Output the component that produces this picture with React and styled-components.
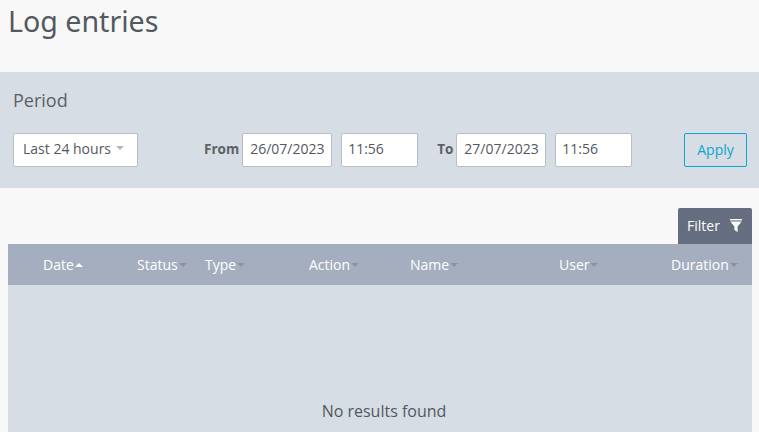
import React from "react";
import styled, { createGlobalStyle } from "styled-components";

const GlobalStyle = createGlobalStyle`
  html, body {
    margin: 0;
    height: 100%;
    overflow: hidden;
    background-color: #f8f8f8;
    font-family: "Open Sans", "Noto Sans", sans-serif;
    color: #54585f;
  }
  * {
    box-sizing: border-box;
  }
`;

const Page = styled.div`
  width: 759px;
  height: 432px;
  overflow: hidden;
`;

const Header = styled.header`
  height: 72px;
  padding: 2px 8px 0;
`;

const Title = styled.h1`
  margin: 0;
  font-family: "Noto Sans", sans-serif;
  font-size: 28.6px;
  line-height: 38px;
  font-weight: 400;
  color: #54585f;
`;

const PeriodPanel = styled.section`
  height: 116px;
  padding: 16px 12px 0 13px;
  background-color: #d6dde4;
`;

const PeriodTitle = styled.h2`
  margin: 0 0 21px;
  font-size: 18px;
  line-height: 24px;
  font-weight: 400;
  color: #5d6166;
`;

const PeriodRow = styled.div`
  display: flex;
  align-items: center;
  height: 34px;
`;

const SelectBox = styled.div`
  display: flex;
  align-items: center;
  width: 125px;
  height: 34px;
  padding: 0 0 4px 9px;
  margin-right: 66px;
  background-color: #fff;
  border: 1px solid #b9bec4;
  border-radius: 2px;
  font-size: 14px;
`;

const Caret = styled.span`
  display: inline-block;
  width: 0;
  height: 0;
  margin-left: ${(p) => p.$gap ?? 1}px;
  border-left: 4px solid transparent;
  border-right: 4px solid transparent;
  border-top: ${(p) => (p.$up ? "0" : "4px solid " + p.$color)};
  border-bottom: ${(p) => (p.$up ? "4px solid " + p.$color : "0")};
`;

const FieldLabel = styled.label`
  margin: 0 3px 3px 0;
  font-size: 13.5px;
  font-weight: 700;
  color: #5d6166;
`;

const FieldBox = styled.div`
  display: flex;
  align-items: center;
  width: ${(p) => p.$width}px;
  height: 34px;
  margin-right: ${(p) => p.$after}px;
  padding: 0 0 4px ${(p) => p.$pad}px;
  background-color: #fff;
  border: 1px solid #b9bec4;
  border-radius: 2px;
  font-size: 14px;
`;

const ApplyButton = styled.button`
  width: 63px;
  height: 34px;
  margin-left: auto;
  padding: 0 0 1px;
  background: transparent;
  border: 1px solid #0ea5cf;
  border-radius: 2px;
  color: #0ea5cf;
  font-family: inherit;
  font-size: 14px;
`;

const Results = styled.section`
  padding: 20px 7px 0 8px;
`;

const FilterBar = styled.div`
  display: flex;
  justify-content: flex-end;
`;

const FilterButton = styled.button`
  display: flex;
  align-items: center;
  width: 74px;
  height: 36px;
  padding: 0 0 2px 9px;
  background-color: #656d80;
  border: 0;
  border-radius: 2px 2px 0 0;
  color: #fff;
  font-family: inherit;
  font-size: 14px;
`;

const FilterIcon = styled.svg`
  width: 12px;
  height: 13px;
  margin-left: 10px;
  fill: #fff;
`;

const TableHead = styled.div`
  display: grid;
  grid-template-columns: 129px 68px 104px 101px 149px 112px 81px;
  align-items: center;
  height: 41px;
  background-color: #a5aebf;
`;

const HeadCell = styled.div`
  display: flex;
  align-items: center;
  color: #fff;
  font-size: 14px;
  &:first-child {
    padding-left: 35px;
  }
`;

const TableBody = styled.div`
  display: flex;
  justify-content: center;
  height: 160px;
  padding: 114px 0 0 8px;
  background-color: #d6dde4;
  font-size: 16px;
  line-height: 24px;
  color: #54585f;
`;

const columns = ["Date", "Status", "Type", "Action", "Name", "User", "Duration"];

const App = () => (
  <Page>
    <GlobalStyle />
    <Header>
      <Title>Log entries</Title>
    </Header>
    <PeriodPanel>
      <PeriodTitle>Period</PeriodTitle>
      <PeriodRow>
        <SelectBox>
          Last 24 hours
          <Caret $gap={5} $color="#b4b8bd" />
        </SelectBox>
        <FieldLabel>From</FieldLabel>
        <FieldBox $width={90} $after={9} $pad={7}>26/07/2023</FieldBox>
        <FieldBox $width={77} $after={19} $pad={6}>11:56</FieldBox>
        <FieldLabel>To</FieldLabel>
        <FieldBox $width={90} $after={9} $pad={7}>27/07/2023</FieldBox>
        <FieldBox $width={77} $after={0} $pad={6}>11:56</FieldBox>
        <ApplyButton>Apply</ApplyButton>
      </PeriodRow>
    </PeriodPanel>
    <Results>
      <FilterBar>
        <FilterButton>
          Filter
          <FilterIcon viewBox="0 0 12 13">
            <path d="M0 0h12v1.4H0z" />
            <path d="M0.3 2.6h11.4L7.6 7.4V13L4.4 11V7.4z" />
          </FilterIcon>
        </FilterButton>
      </FilterBar>
      <TableHead>
        {columns.map((name, i) => (
          <HeadCell key={name}>
            {name}
            <Caret $up={i === 0} $color={i === 0 ? "#fff" : "#8b93a3"} />
          </HeadCell>
        ))}
      </TableHead>
      <TableBody>No results found</TableBody>
    </Results>
  </Page>
);

export default App;
